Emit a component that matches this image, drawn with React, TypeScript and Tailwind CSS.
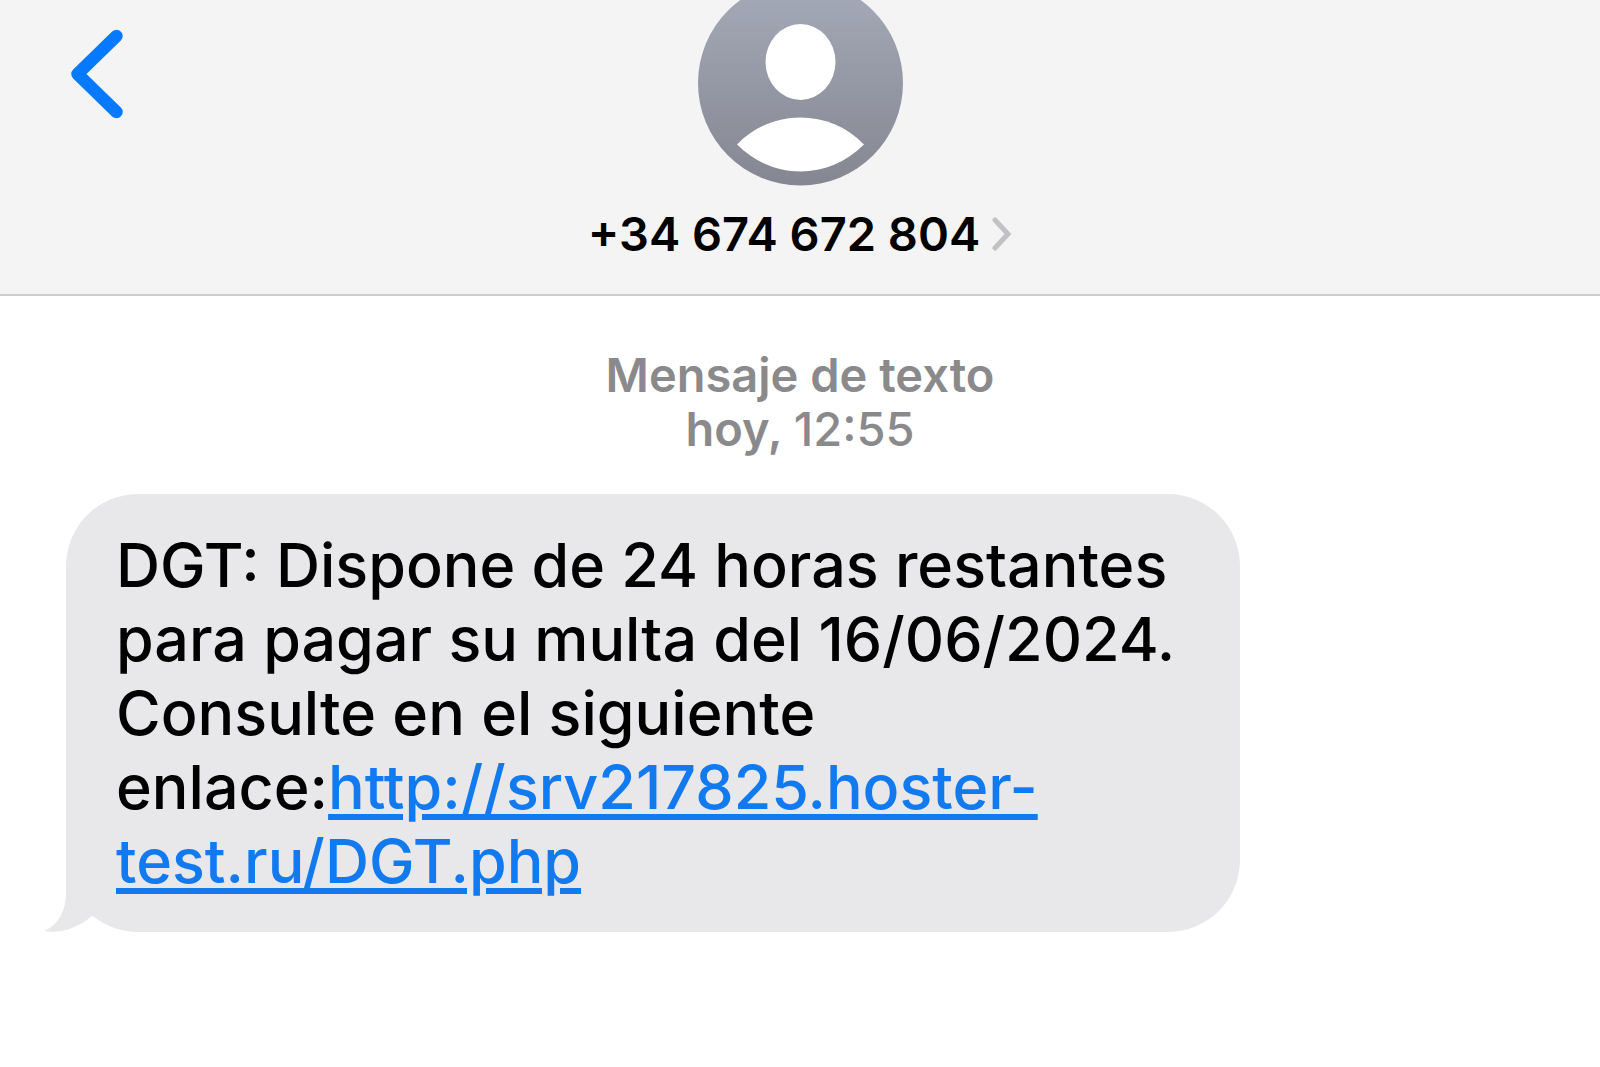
export default function App() {
  return (
    <div className="min-h-screen bg-white font-['Inter',sans-serif] text-black">
      <header className="grid grid-cols-[1fr_auto_1fr] items-start border-b-2 border-[#cdcdcf] bg-[#f4f4f4] pb-9">
        <button type="button" aria-label="Atrás" className="mt-7 ml-17 justify-self-start">
          <svg className="h-[94px] w-[58px]" viewBox="0 0 58 94" fill="none">
            <path d="M48.500 8 9.500 46l39 38" stroke="#057aff" strokeWidth="12.500" strokeLinecap="round" strokeLinejoin="round" />
          </svg>
        </button>
        <button type="button" className="flex flex-col items-center">
          <svg className="h-[186px] w-[208px]" viewBox="0 0 208 186">
            <defs>
              <linearGradient id="avatar" x1="0" y1="0" x2="0" y2="1">
                <stop offset="0" stopColor="#a5abb9" />
                <stop offset="1" stopColor="#858691" />
              </linearGradient>
            </defs>
            <circle cx="104.500" cy="83" r="102.500" fill="url(#avatar)" />
            <ellipse cx="104.500" cy="62" rx="35" ry="38" fill="white" />
            <path d="M41 144.500c34-36 93-36 127 0-36 36-91 36-127 0Z" fill="white" />
          </svg>
          <span className="mt-6 flex items-center gap-3 text-[47px] leading-12 font-semibold">
            +34 674 672 804
            <svg className="h-9 w-5" viewBox="0 0 20 36" fill="none">
              <path d="m3 4 13 14L3 32" stroke="#c2c2c4" strokeWidth="5" strokeLinecap="round" />
            </svg>
          </span>
        </button>
      </header>
      <main className="px-[66px] pt-[52px]">
        <p className="text-center text-[47px] leading-[54px] font-semibold text-[#8a8a8d]">
          Mensaje de texto
          <br />
          hoy, <time className="font-medium">12:55</time>
        </p>
        <div className="relative mt-[38px] w-4/5 rounded-[72px] bg-[#e8e8ea] px-[50px] py-[34px] text-[61px] leading-[74px] font-medium">
          <svg className="absolute bottom-0 -left-[22px] h-20 w-[60px]" viewBox="0 0 60 80" fill="#e8e8ea">
            <path d="M22 0v40C22 60 14 73 0 79c16 3 34-3 48-15L60 50V0Z" />
          </svg>
          <p className="relative">
            DGT: Dispone de 24 horas restantes
            <br />
            para pagar su multa del 16/06/2024.
            <br />
            Consulte en el siguiente
            <br />
            enlace:
            <a href="#" className="text-[#117af0] underline decoration-[6px] underline-offset-[5px]">
              http://srv217825.hoster-
              <br />
              test.ru/DGT.php
            </a>
          </p>
        </div>
      </main>
    </div>
  );
}
